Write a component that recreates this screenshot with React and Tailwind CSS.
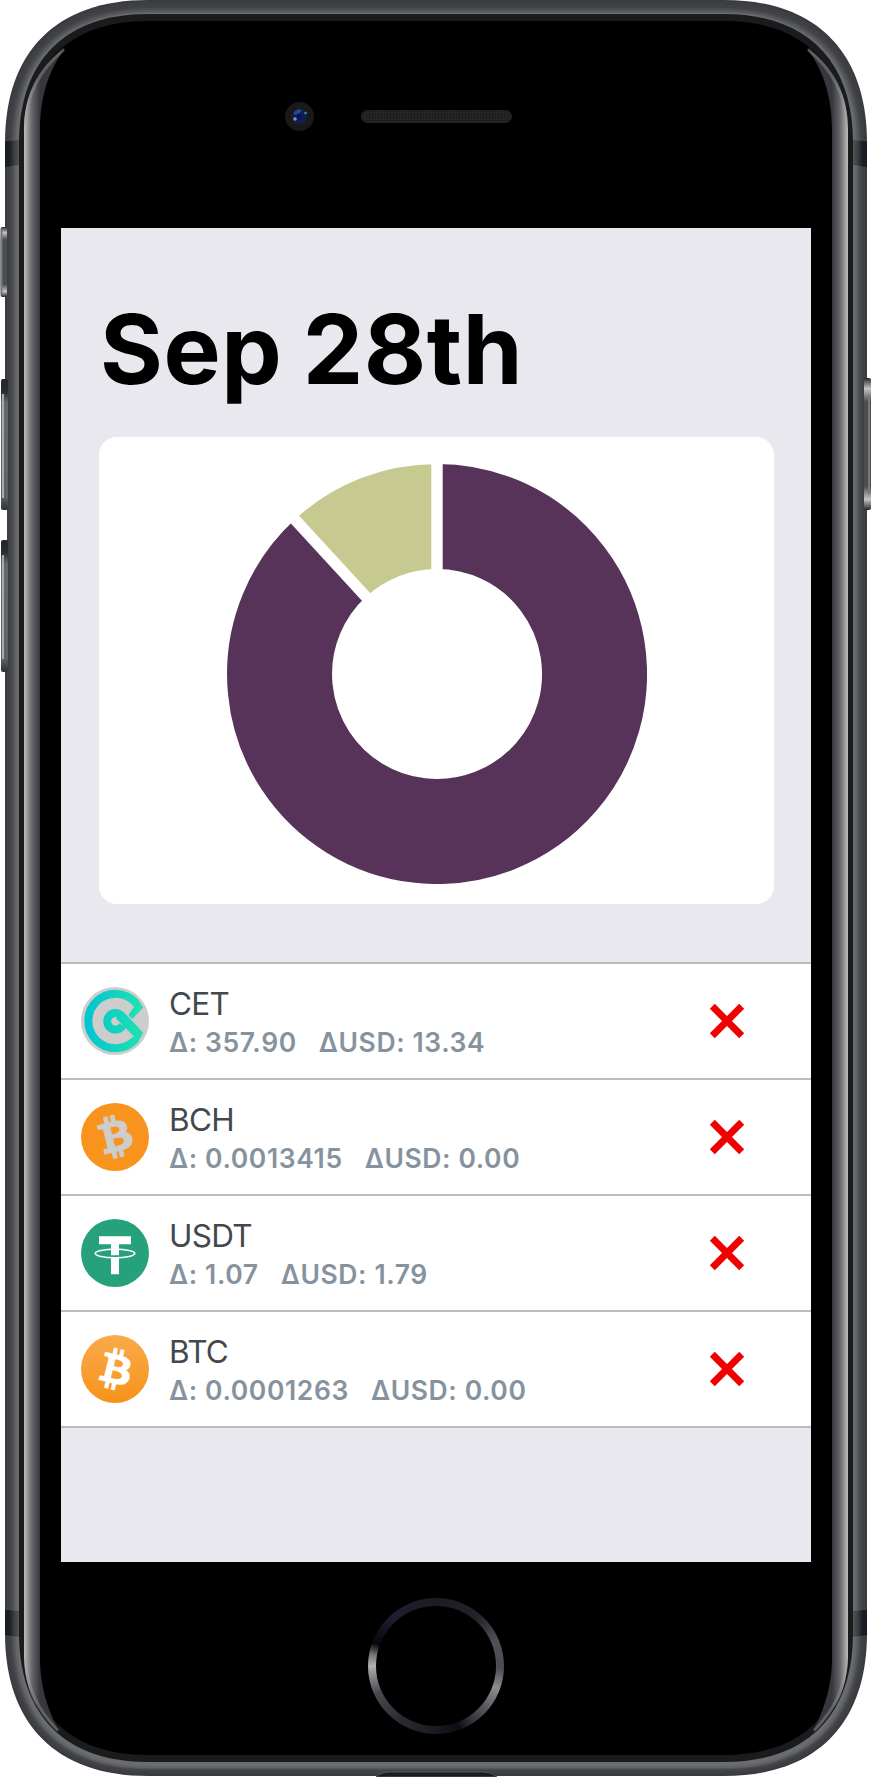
import React from "react";

const coins = [
  { symbol: "CET", delta: "357.90", usd: "13.34", Icon: CetIcon },
  { symbol: "BCH", delta: "0.0013415", usd: "0.00", Icon: BchIcon },
  { symbol: "USDT", delta: "1.07", usd: "1.79", Icon: UsdtIcon },
  { symbol: "BTC", delta: "0.0001263", usd: "0.00", Icon: BtcIcon },
];

const BITCOIN =
  "M23.189 14.02c.314-2.096-1.283-3.223-3.465-3.975l.708-2.84-1.728-.43-.69 2.765c-.454-.114-.92-.22-1.385-.326l.695-2.783L15.596 6l-.708 2.839c-.376-.086-.746-.17-1.104-.26l.002-.009-2.384-.595-.46 1.846s1.283.294 1.256.312c.7.175.826.638.805 1.006l-.806 3.235c.048.012.11.03.18.057l-.183-.045-1.13 4.532c-.086.212-.303.531-.793.41.018.025-1.256-.313-1.256-.313l-.858 1.978 2.25.561c.418.105.828.215 1.231.318l-.715 2.872 1.727.43.708-2.84c.472.127.93.245 1.378.357l-.706 2.828 1.728.43.715-2.866c2.948.558 5.164.333 6.097-2.333.752-2.146-.037-3.385-1.588-4.192 1.13-.26 1.98-1.003 2.207-2.538zm-3.95 5.538c-.533 2.147-4.148.986-5.32.695l.95-3.805c1.172.293 4.929.872 4.37 3.11zm.535-5.569c-.487 1.953-3.495.96-4.47.717l.86-3.45c.975.243 4.118.696 3.61 2.733z";

function CetIcon() {
  return (
    <svg className="size-[68px]" viewBox="0 0 68 68">
      <defs>
        <linearGradient id="cet" x1="3" x2="62" y1="0" y2="0" gradientUnits="userSpaceOnUse">
          <stop offset="0" stopColor="#00c3d3" />
          <stop offset="1" stopColor="#22e2ae" />
        </linearGradient>
      </defs>
      <circle cx="34" cy="34" r="34" fill="#cdcdcd" />
      <path d="M54 15A27.200 27.200 0 1 0 54 53" fill="none" stroke="url(#cet)" strokeWidth="8" />
      <path d="M56.500 11.800 62.300 20.400 51.200 32 47.300 28 53 19.700 50.500 17Z" fill="url(#cet)" />
      <path d="M40.500 24 44.500 26.800 62.300 45.700 56.500 56 50.500 51.500 53 49.500 35 31.500Z" fill="url(#cet)" />
      <path d="M41.800 38.300A8.300 8.300 0 1 1 40.500 28.600" fill="none" stroke="url(#cet)" strokeWidth="8" />
    </svg>
  );
}

function BchIcon() {
  return (
    <svg className="size-[68px]" viewBox="0 0 32 32">
      <circle cx="16" cy="16" r="16" fill="#f8941d" />
      <path
        d={BITCOIN}
        fill="#cdcdcd"
        stroke="#cdcdcd"
        strokeWidth=".35"
        transform="translate(15.700 15.800) rotate(-28) scale(1.030) translate(-16 -16)"
      />
    </svg>
  );
}

function BtcIcon() {
  return (
    <svg className="size-[68px]" viewBox="0 0 32 32">
      <defs>
        <linearGradient id="btc" x1="0" x2="0" y1="0" y2="1">
          <stop offset="0" stopColor="#f9aa4b" />
          <stop offset="1" stopColor="#f7931a" />
        </linearGradient>
      </defs>
      <circle cx="16" cy="16" r="16" fill="url(#btc)" />
      <path d={BITCOIN} fill="#fff" stroke="#fff" strokeWidth=".2" />
    </svg>
  );
}

function UsdtIcon() {
  return (
    <svg className="size-[68px]" viewBox="0 0 68 68">
      <circle cx="34" cy="34" r="34" fill="#26a17b" />
      <path d="M18 17.3H50V25.2H38V30.2H30V25.2H18Z" fill="#fff" />
      <path d="M30 30H38V36.2H30ZM30 38.5H38V55.3H30Z" fill="#fff" />
      <ellipse cx="34" cy="34.5" rx="19.8" ry="4.2" fill="none" stroke="#fff" strokeWidth="1.5" />
    </svg>
  );
}

function Donut() {
  return (
    <svg className="size-[420px]" viewBox="-210 -210 420 420">
      <path d="M0-157.500A157.500 157.500 0 1 1-106.600-115.900" fill="none" stroke="#573259" strokeWidth="105" />
      <path d="M0-157.500A157.500 157.500 0 0 0-106.600-115.900" fill="none" stroke="#c7ca90" strokeWidth="105" />
      <path d="M0 0V-214M0 0-144.900-157.500" stroke="#fff" strokeWidth="11.400" />
    </svg>
  );
}

function CoinRow({ symbol, delta, usd, Icon }) {
  return (
    <li className="flex h-[116px] items-center border-b-2 border-[#bbbbbd] bg-white pl-5 pr-[67px]">
      <Icon />
      <div className="mt-1 ml-5 flex grow flex-col">
        <span className="text-[31.500px] leading-[38px] tracking-[-0.7px] text-[#43484d]">{symbol}</span>
        <span className="flex gap-[22px] text-[26.500px] leading-[38px] font-semibold tracking-[0.6px] text-[#86939e]">
          <span>Δ: {delta}</span>
          <span>ΔUSD: {usd}</span>
        </span>
      </div>
      <svg className="size-[34px] overflow-visible" viewBox="0 0 34 34">
        <path d="m2.300 2.300 29.400 29.400M31.700 2.300 2.300 31.700" stroke="#f00000" strokeWidth="7" />
      </svg>
    </li>
  );
}

function Glare({ flip }) {
  return (
    <g transform={flip ? "translate(872 0) scale(-1 1)" : undefined}>
      <path
        d="M24 130C24 98 36 68 65 48C49 70 40 96 40 130V1657C40 1688 48 1709 59 1732C36 1713 25 1689 24 1657Z"
        fill="url(#glare)"
      />
      <path d="M25.500 126C26 98 38 71 64 49.500" fill="none" stroke="#a0a0a0" strokeWidth="3" opacity=".4" />
      <path d="M25.500 1660C27 1689 38.500 1711 58 1730.500" fill="none" stroke="#a0a0a0" strokeWidth="3" opacity=".4" />
      <path d="M5 141.500 19 140V165L5 167ZM5 1610 19 1611V1637L5 1635Z" fill="url(#band)" />
    </g>
  );
}

// Rounded outline whose corners ease in gradually from the straight edges.
function outline(x, y, width, height) {
  const right = x + width;
  const bottom = y + height;
  const reach = 148 - x;
  const handle = reach * 0.36;
  return [
    `M${x + reach} ${y}H${right - reach}`,
    `C${right - handle} ${y} ${right} ${y + handle} ${right} ${y + reach}`,
    `V${bottom - reach}`,
    `C${right} ${bottom - handle} ${right - handle} ${bottom} ${right - reach} ${bottom}`,
    `H${x + reach}`,
    `C${x + handle} ${bottom} ${x} ${bottom - handle} ${x} ${bottom - reach}`,
    `V${y + reach}`,
    `C${x} ${y + handle} ${x + handle} ${y} ${x + reach} ${y}Z`,
  ].join("");
}

function Shell() {
  return (
    <svg className="absolute inset-0 h-[1777px] w-[871px]" viewBox="0 0 871 1777">
      <defs>
        <linearGradient id="glare" x1="24" x2="40" y1="0" y2="0" gradientUnits="userSpaceOnUse">
          <stop offset="0" stopColor="#bdbdbb" />
          <stop offset="0.15" stopColor="#a3a3a2" />
          <stop offset="0.5" stopColor="#66676a" />
          <stop offset="1" stopColor="#37383d" />
        </linearGradient>
        <linearGradient id="band" x1="5" x2="19" y1="0" y2="0" gradientUnits="userSpaceOnUse">
          <stop offset="0.3" stopColor="#181e24" />
          <stop offset="0.7" stopColor="#3d4143" />
          <stop offset="1" stopColor="#525556" />
        </linearGradient>
        <linearGradient id="key" x1="0" x2="0" y1="0" y2="1">
          <stop offset="0" stopColor="#252629" />
          <stop offset="0.1" stopColor="#2c2d31" />
          <stop offset="0.18" stopColor="#66676c" />
          <stop offset="0.9" stopColor="#606166" />
          <stop offset="1" stopColor="#2f3034" />
        </linearGradient>
        <linearGradient id="switch" x1="0" x2="0" y1="0" y2="1">
          <stop offset="0" stopColor="#26272a" />
          <stop offset="0.08" stopColor="#c4c4c8" />
          <stop offset="0.18" stopColor="#4c4d51" />
          <stop offset="0.82" stopColor="#4c4d51" />
          <stop offset="0.92" stopColor="#c4c4c8" />
          <stop offset="1" stopColor="#26272a" />
        </linearGradient>
      </defs>
      {[
        [5, 0, 862, 1776, "#3a3b40"],
        [7, 2, 858, 1772, "#3e3f43"],
        [9, 5, 854, 1767, "#414246"],
        [11, 8, 850, 1762, "#4a4b4f"],
        [13, 10, 846, 1759, "#56575b"],
        [15, 12, 842, 1756, "#636468"],
        [17, 13, 838, 1753, "#6b6c70"],
        [19, 14, 834, 1748, "#1a1b1c"],
        [24, 21, 824, 1734, "#000"],
      ].map(([x, y, width, height, fill]) => (
        <path key={x} d={outline(x, y, width, height)} fill={fill} />
      ))}
      <rect x="0.500" y="227" width="6.500" height="70" rx="2" fill="url(#switch)" />
      <rect x="0.500" y="230" width="2" height="64" fill="#77787c" />
      <rect x="1" y="379" width="7" height="131" rx="2" fill="url(#key)" />
      <rect x="2" y="394" width="2" height="104" fill="#a8aaae" />
      <path d="M4.500 510H7V540H4.500Z" fill="#fff" />
      <rect x="1" y="540" width="7" height="132" rx="2" fill="url(#key)" />
      <rect x="2" y="555" width="2" height="104" fill="#a8aaae" />
      <rect x="864" y="378" width="7" height="132" rx="2" fill="url(#switch)" />
      <rect x="868" y="396" width="2" height="98" fill="#77787c" />
      <Glare />
      <Glare flip />
      <path d="M376 1777Q381 1772 389 1772H484Q491 1772 497 1777Z" fill="#1b1c1d" stroke="#55565a" />
    </svg>
  );
}

function Camera() {
  return (
    <svg className="size-[29px]" viewBox="0 0 29 29">
      <defs>
        <radialGradient id="lens">
          <stop offset="0" stopColor="#06104f" />
          <stop offset="0.5" stopColor="#0c1d60" />
          <stop offset="1" stopColor="#16213a" />
        </radialGradient>
      </defs>
      <circle cx="14.500" cy="14.500" r="14.500" fill="#191919" />
      <circle cx="14.500" cy="14.500" r="7.500" fill="url(#lens)" />
      <ellipse cx="12.500" cy="10" rx="4" ry="2" fill="#3352a3" opacity=".8" transform="rotate(-25 12.500 10)" />
      <circle cx="10" cy="17" r="1.800" fill="#8295b8" />
      <circle cx="20.500" cy="11" r="1.300" fill="#4d83a8" />
    </svg>
  );
}

export default function App() {
  return (
    <div className="relative h-[1777px] w-[871px] overflow-hidden bg-white font-['Inter',sans-serif]">
      <Shell />
      <div className="relative flex h-full flex-col pl-[61px] pr-[60px]">
        <div className="flex h-[228px] items-start pt-[102px] pl-[224px]">
          <Camera />
          <div className="mt-2 ml-[47px] h-[13px] w-[151px] rounded-full bg-[#262626] bg-[repeating-linear-gradient(90deg,transparent_0_2px,#00000028_2px_3px),repeating-linear-gradient(0deg,transparent_0_2px,#00000028_2px_3px)]" />
        </div>
        <main className="flex h-[1334px] flex-col bg-[#e9e8ee]">
          <h1 className="mt-[61px] ml-[39px] h-[120px] text-[96px] leading-[120px] font-bold tracking-[0.6px] [word-spacing:-3px] whitespace-nowrap text-black">
            Sep 28th
          </h1>
          <section className="mt-7 ml-[38px] flex h-[467px] w-[675px] justify-center rounded-[18px] bg-white pt-[27px]">
            <Donut />
          </section>
          <ul className="mt-[58px] border-t-2 border-[#bbbbbd]">
            {coins.map((coin) => (
              <CoinRow key={coin.symbol} {...coin} />
            ))}
          </ul>
        </main>
        <footer className="flex justify-center pt-9">
          <div className="size-[136px] rounded-full bg-[conic-gradient(#1c1c23_0deg,#222228_40deg,#505056_68deg,#4c4c54_92deg,#8c8c8e_110deg,#66666a_125deg,#303035_148deg,#0c0c14_160deg,#1c1c23_185deg,#2c2c32_215deg,#48484e_245deg,#b0b0b0_270deg,#77777a_280deg,#07070f_290deg,#1e1e2e_318deg,#1c1c23_360deg)] p-2">
            <div className="size-full rounded-full bg-black" />
          </div>
        </footer>
      </div>
    </div>
  );
}
